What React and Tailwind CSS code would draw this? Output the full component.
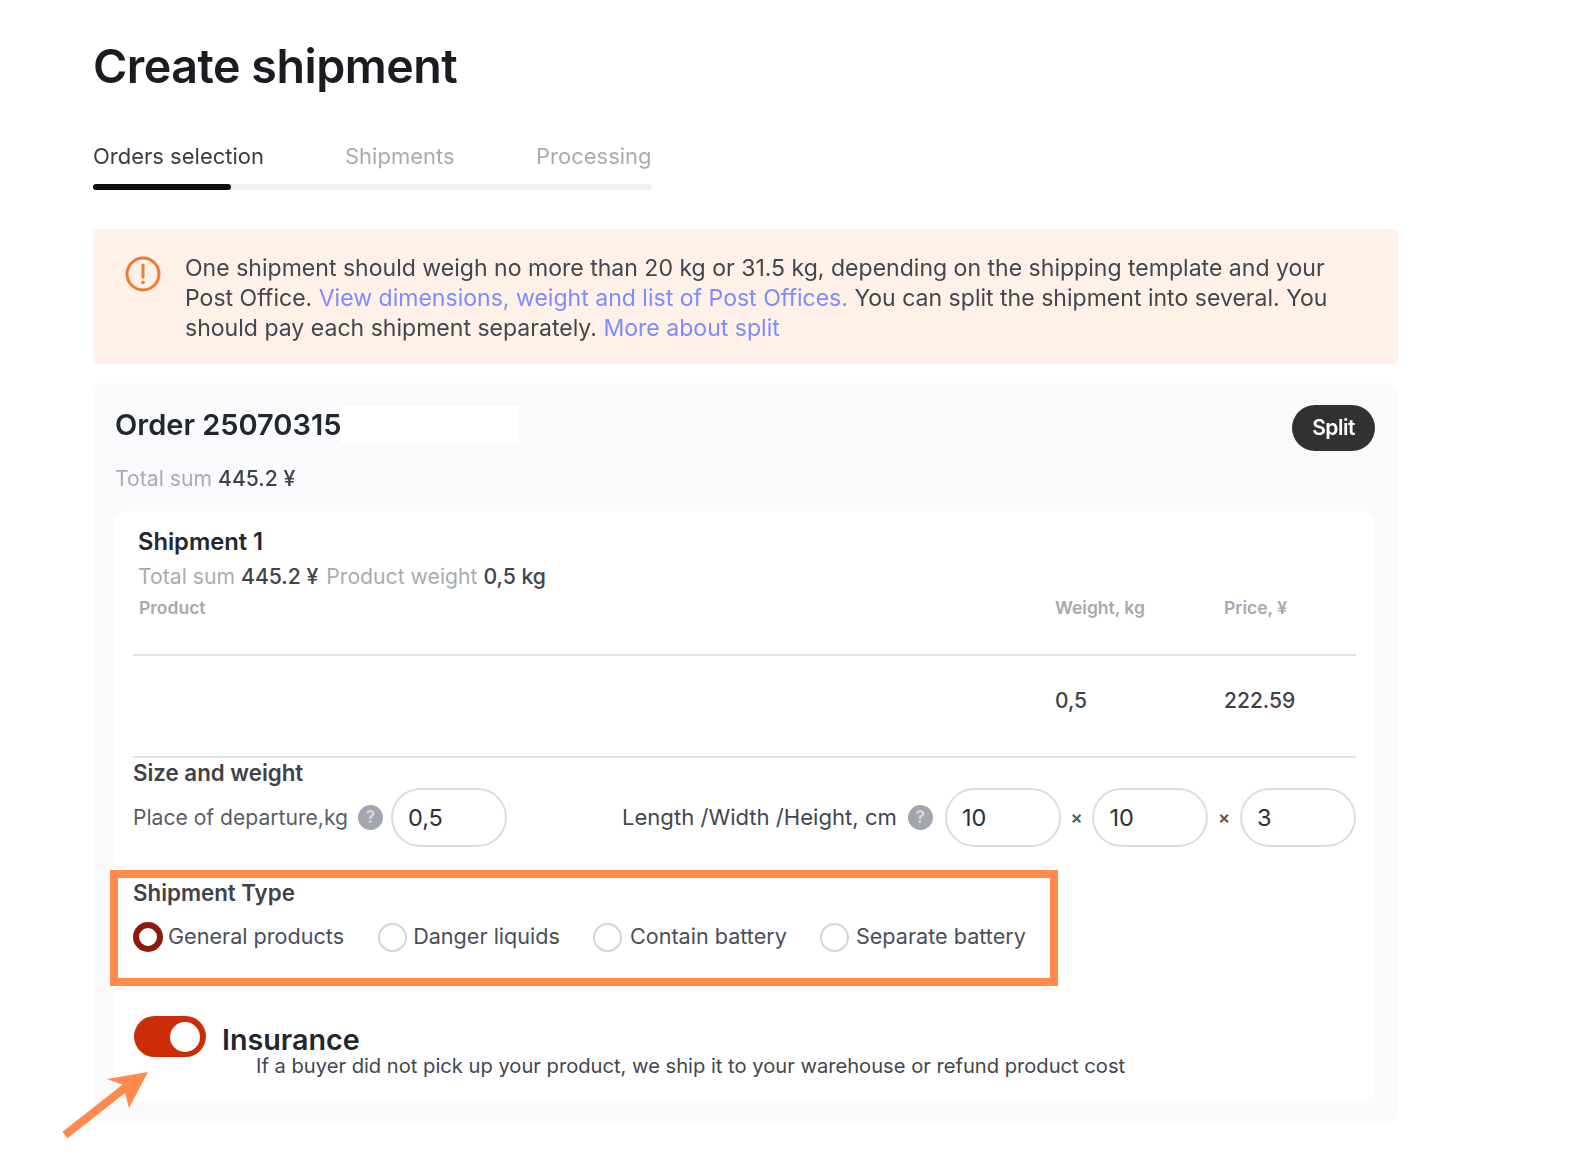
function Help({ className = "" }) {
  return (
    <span className={`flex h-[25px] w-[25px] shrink-0 items-center justify-center rounded-full bg-[#a3a5b0] text-[17px] font-bold text-[#d5d6dc] ${className}`}>?</span>
  );
}

function Field({ value, className = "" }) {
  return (
    <div className={`flex h-[59px] w-[116px] shrink-0 items-center rounded-full border-2 border-[#dcdcdc] bg-white pl-[15px] text-[23.5px] text-[#2d3039] ${className}`}>
      {value}
    </div>
  );
}

function Radio({ label, checked, className = "", gap = "ml-[6px]" }) {
  return (
    <div className={`flex items-center ${className}`}>
      {checked ? (
        <span className="mt-[3px] h-[30px] w-[30px] shrink-0 rounded-full border-[6px] border-[#8f1a0c] bg-white" />
      ) : (
        <span className="mt-[3px] h-[29px] w-[29px] shrink-0 rounded-full border-2 border-[#d4d4d4] bg-white" />
      )}
      <span className={`${gap} whitespace-nowrap text-[21.6px] leading-[28px] text-[#4b4e58]`}>{label}</span>
    </div>
  );
}

export default function App() {
  return (
    <div className="relative h-[1170px] w-[1594px] overflow-hidden bg-white font-['Inter',sans-serif]">
      <div className="h-full pl-[93px] pt-[36px] blur-[0.4px]">
        <h1 className="text-[46.6px] font-semibold leading-[60px] tracking-[-0.5px] text-[#1a1c22]">Create shipment</h1>

        <div className="mt-[45px] w-[559px]">
          <div className="flex text-[22px] leading-[30px]">
            <span className="w-[252px] text-[#3a3d46]">Orders selection</span>
            <span className="w-[191px] text-[#a9abb4]">Shipments</span>
            <span className="text-[#a9abb4]">Processing</span>
          </div>
          <div className="mt-[13px] h-[6px] rounded-full bg-[#f0f0f1]">
            <div className="h-full w-[138px] rounded-full bg-[#0d0d0d]" />
          </div>
        </div>

        <div className="mt-[39px] flex h-[135px] w-[1305px] rounded-[5px] bg-[#fff1e7] pl-[32px] pt-[24px]">
          <svg className="mt-[2px] h-[38px] w-[36px] shrink-0" viewBox="0 0 36 38" fill="none">
            <circle cx="18" cy="19" r="16" stroke="#f4782e" strokeWidth="3" />
            <path d="M18 10v12" stroke="#f4782e" strokeWidth="3" strokeLinecap="round" />
            <circle cx="18" cy="27.5" r="1.8" fill="#f4782e" />
          </svg>
          <p className="ml-[24px] whitespace-nowrap text-[23.05px] leading-[30px] text-[#43464f]">
            One shipment should weigh no more than 20 kg or 31.5 kg, depending on the shipping template and your
            <br />
            Post Office. <span className="text-[#7d8cff]">View dimensions, weight and list of Post Offices.</span> You can split the shipment into several. You
            <br />
            should pay each shipment separately. <span className="text-[#7d8cff]">More about split</span>
          </p>
        </div>

        <div className="mt-[19px] h-[740px] w-[1304px] rounded-[10px] bg-[#f9fafc] px-[22px] pt-[22px]">
          <div className="flex items-start justify-between">
            <div className="flex items-center">
              <span className="text-[29px] font-semibold leading-[40px] text-[#24262e]">Order 25070315</span>
              <span className="h-[38px] w-[178px] bg-white" />
            </div>
            <button className="h-[46px] w-[83px] rounded-full bg-[#303130] text-[21px] font-semibold tracking-[-0.5px] text-white">Split</button>
          </div>
          <div className="mt-[12px] text-[21.2px] leading-[30px] text-[#a9abb4]">
            Total sum <span className="font-medium text-[#3f424b]">445.2 ¥</span>
          </div>

          <div className="relative mt-[18px] h-[590px] w-[1259px] rounded-[12px] bg-white px-[18px]">
            <div className="px-[5px] pt-[15px] text-[23.7px] font-semibold leading-[32px] text-[#24262e]">Shipment 1</div>
            <div className="mt-[3px] px-[5px] text-[21.2px] leading-[30px] text-[#a9abb4]">
              Total sum <span className="mr-[2px] font-medium text-[#3f424b]">445.2 ¥</span> Product weight <span className="font-medium text-[#3f424b]">0,5 kg</span>
            </div>
            <div className="mt-[5px] flex border-b-2 border-[#e3e3e3] pb-[34px] text-[17.5px] font-semibold leading-[24px] text-[#a7a8b0]">
              <span className="w-[922px] pl-[6px]">Product</span>
              <span className="w-[169px]">Weight, kg</span>
              <span>Price, ¥</span>
            </div>
            <div className="flex h-[102px] border-b-2 border-[#e3e3e3] pt-[30px] text-[21px] font-medium leading-[30px] text-[#3f424b]">
              <span className="w-[922px]" />
              <span className="w-[169px]">0,5</span>
              <span>222.59</span>
            </div>

            <div className="text-[22.3px] font-semibold leading-[30px] text-[#3f424b]">Size and weight</div>
            <div className="flex items-center whitespace-nowrap">
              <span className="text-[21.1px] text-[#5a5d67]">Place of departure,kg</span>
              <Help className="ml-[10px]" />
              <Field value="0,5" className="ml-[8px]" />
              <span className="ml-[115px] text-[22.1px] text-[#43464f]">Length /Width /Height, cm</span>
              <Help className="ml-[11px]" />
              <Field value="10" className="ml-[12px]" />
              <span className="w-[31.5px] shrink-0 text-center text-[18px] font-semibold text-[#55585f]">×</span>
              <Field value="10" />
              <span className="w-[31.5px] shrink-0 text-center text-[18px] font-semibold text-[#55585f]">×</span>
              <Field value="3" />
            </div>

            <div className="mt-[31px] text-[22.3px] font-semibold leading-[30px] text-[#3f424b]">Shipment Type</div>
            <div className="mt-[11px] flex items-center">
              <Radio label="General products" checked gap="ml-[5px]" />
              <Radio label="Danger liquids" className="ml-[34px]" />
              <Radio label="Contain battery" className="ml-[33px]" gap="ml-[8px]" />
              <Radio label="Separate battery" className="ml-[33px]" gap="ml-[7px]" />
            </div>

            <div className="ml-[1px] mt-[64px] flex">
              <div className="flex h-[41px] w-[72px] shrink-0 items-center justify-end rounded-full bg-[#cc2d08] pr-[6px]">
                <span className="h-[30px] w-[30px] rounded-full bg-white" />
              </div>
              <div className="ml-[16px] mt-[6px] text-[28.7px] font-semibold leading-[36px] text-[#24262e]">Insurance</div>
            </div>
            <div className="ml-[123px] mt-[-6px] whitespace-nowrap text-[20.15px] leading-[28px] text-[#43464f]">
              If a buyer did not pick up your product, we ship it to your warehouse or refund product cost
            </div>
          </div>
        </div>
      </div>

      <div className="absolute left-[110px] top-[870px] h-[116px] w-[948px] border-[8px] border-[#ff8a4c]" />
      <svg className="absolute left-[60px] top-[1065px]" width="95" height="75" viewBox="0 0 95 75" fill="none">
        <path d="M5 70 L66 22" stroke="#ff8a4c" strokeWidth="8" />
        <path d="M88 7 L47 14 L63 20 L69 43 Z" fill="#ff8a4c" />
      </svg>
    </div>
  );
}
